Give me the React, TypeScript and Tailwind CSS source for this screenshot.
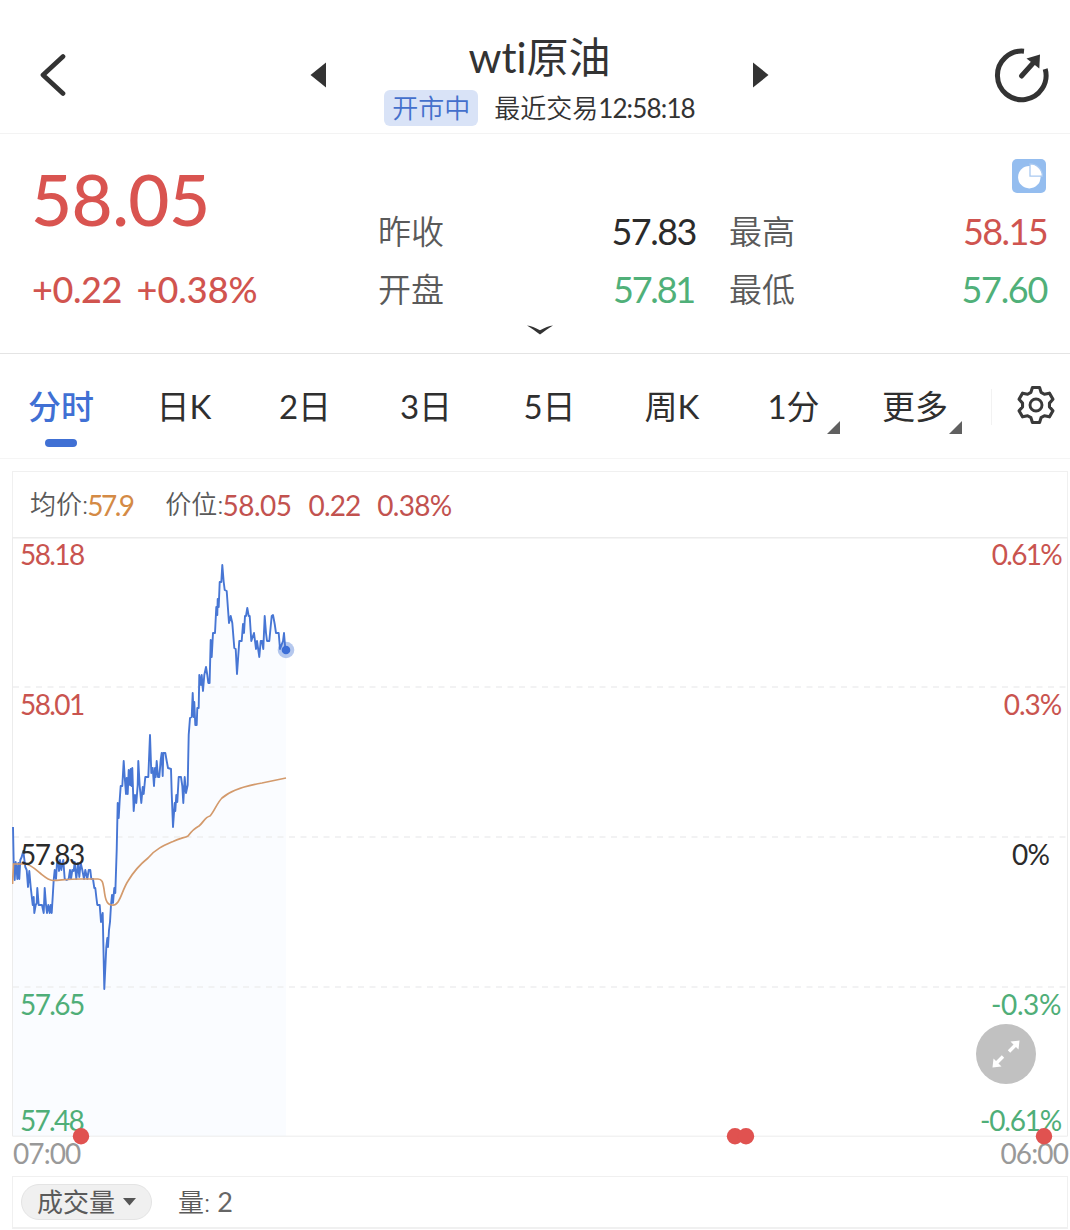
import { useState } from "react";

const PRICE_POINTS =
  "13,827 13.7,863 14.7,880 15.7,862 16.7,870 17.3,879 18.3,863 19.3,879 20.3,860 21.7,857 23.3,851 25.3,867 26.7,870 28,887 29.3,871 30.7,887 31.7,896 32.7,905 33.7,897 34.3,913 35.7,905 36.7,903 37.3,888 38.7,905 42,905 43.7,913 44.7,888 46,905 47,913 48.3,905 49.7,913 50.7,905 51.7,913 52.7,897 53.7,880 54.7,870 56,879 57,863 58.3,862 59,871 60,860 61.3,870 62.7,862 63.3,860 64.7,879 66.7,880 68.7,879 70,870 71,879 72.3,870 73.7,871 74.7,862 76.3,879 78,863 79.3,877 80.7,863 82.3,870 84,879 85.3,870 87.3,879 88.7,870 90.3,870 91.3,879 93,879 94.3,888 95.3,888 96.3,897 97.3,905 99.7,905 101,922 102.7,913 104.3,989 106.3,947 107.3,938 108,947 109,930 110,922 111,905 112,895 113,903 114.3,888 115.3,893 116.7,850 117.7,803 118.7,818 119.7,800 120.7,786 122.3,786 123.7,761 124.7,777 126,794 126.7,778 127.7,794 128.7,770 130,785 130.7,769 131.6,786 132.3,768 133.7,811 135,795 136.3,803 137.7,785 138.3,761 139.7,786 141.3,803 142.7,787 143.7,794 145.3,777 148.3,777 150,735 151.3,773 152.7,768 154,786 155,768 155.7,777 156.7,761 158,777 159.3,777 160.7,760 161.7,753 162.7,776 163.3,753 165.3,753 166.7,761 168,768 171,769 171.7,793 173,827 174.7,803 175.3,811 176.3,795 177.3,802 178.7,777 181,777 182.3,786 183.3,803 184.7,777 186,793 187.7,785 188.7,735 190,718 191.7,717 192.7,693 193.7,717 194.3,702 195.3,725 196.7,725 197.3,708 198.7,708 199.3,675 201,685 201.7,675 203,691 204.3,675 206,667 207.3,675 208.3,683 209.6,683 210.7,640 211.7,657 213,633 215,633 216.3,607 217.3,615 217.7,599 218.7,607 219.7,582 221.3,582 222.3,565 223.7,582 224.7,590 226.7,591 229,623 230.7,616 232.3,623 234.3,648 235.7,649 237,674 239.3,641 241.7,641 243,624 244,633 245,616 246,616 247.3,608 248.7,616 249.7,616 251.3,641 254,633 256,649 257,641 259.3,657 260.7,641 262,641 263.3,649 264.7,616 266,633 267,641 269.3,641 271.7,616 273,615 274.7,624 276,633 278.7,633 280,649 283,641 284,633 285.3,649";

const AVG_PATH =
  "M12.5 884 L13.5 864 H26 C31 865 35 869 40 873 C45 877 48 880 53 880.5 C62 880 70 879 80 879 L98 879 C103 879 103 884 104 889 C105 897 106 905 112 905 C120 906 121 892 128 881 C134 871 143 862 148 858 C155 849 165 845 173 841.5 C180 838 184 838 188 836 C191 832 195 828 199 826 C203 823 205 817 210 816 C214 812 217 803 222 798 C231 790 244 786 262 783 L286 778";

const TABS = [
  { label: "分时", cls: "w-[122px]" },
  { label: "日K", cls: "w-[124px]" },
  { label: "2日", cls: "w-[118px]" },
  { label: "3日", cls: "w-[124px]" },
  { label: "5日", cls: "w-[123px]" },
  { label: "周K", cls: "w-[122px]" },
  { label: "1分", cls: "w-[121px]", menu: true },
  { label: "更多", cls: "w-[122px]", menu: true },
];

const LEVELS = [
  { price: "58.18", pct: "0.61%", cls: "text-[#c9544f]", pctCls: "tracking-[-1.7px]" },
  { price: "58.01", pct: "0.3%", cls: "text-[#c9544f]", pctCls: "tracking-[-1.1px]" },
  { price: "57.83", pct: "0%", cls: "text-[#2b2b2b]", pctCls: "pr-3 tracking-[-0.9px]" },
  { price: "57.65", pct: "-0.3%", cls: "text-[#4fae78]", pctCls: "tracking-[-0.4px]" },
];

const EVENTS = [81, 735, 746, 1044];

// six-tooth gear outline: [radius, degrees from the tooth axis]
const TOOTH: [number, number][] = [[13.6, -22], [17.9, -11.5], [17.9, 11.5], [13.6, 22]];
const GEAR_POINTS = [0, 60, 120, 180, 240, 300]
  .flatMap((axis) =>
    TOOTH.map(([r, off]) => {
      const a = ((axis + off - 90) * Math.PI) / 180;
      return `${(20 + r * Math.cos(a)).toFixed(2)},${(20 + r * Math.sin(a)).toFixed(2)}`;
    })
  )
  .join(" ");

function Quote({ label, value, cls }: { label: string; value: string; cls: string }) {
  return (
    <div className="flex h-[58px] items-center justify-between">
      <span className="text-[33px] font-[350] text-[#5a5a5a]">{label}</span>
      <span className={`pb-0.5 text-[36px] ${cls}`}>{value}</span>
    </div>
  );
}

function Header() {
  return (
    <header className="flex h-[134px] border-b border-[#f3f3f3] pl-10">
      <svg className="mt-[54px] h-[43px] w-[26px]" viewBox="0 0 26 43" fill="none" stroke="#333" strokeWidth="4.7" strokeLinecap="round" strokeLinejoin="round">
        <path d="M23 2.5 L3 21 L23 39.5" />
      </svg>
      <svg className="mt-[62px] ml-[244px] h-[26px] w-4" viewBox="0 0 16 26" fill="#333">
        <path d="M16 0.5 V25.5 L0.5 13 Z" />
      </svg>
      <div className="flex w-[427px] flex-col items-center pt-8">
        <h1 className="h-[50px] text-[42px] leading-[50px] text-[#333] [font-variant-ligatures:none]">wti原油</h1>
        <div className="mt-2 flex h-9 items-center">
          <span className="flex h-9 w-[94px] items-center justify-center rounded-md bg-[#d9e3f7] text-[26px] font-[350] text-[#4470cc]">开市中</span>
          <span className="ml-4 text-[26px] font-[350] whitespace-nowrap text-[#333]">
            最近交易<span className="font-normal tracking-[-0.85px]">12:58:18</span>
          </span>
        </div>
      </div>
      <svg className="mt-[62px] h-[26px] w-4" viewBox="0 0 16 26" fill="#333">
        <path d="M0 0.5 V25.5 L15.5 13 Z" />
      </svg>
      <svg className="mt-[46px] ml-[225px] h-[58px] w-[56px]" viewBox="0 0 56 58" fill="none" stroke="#333">
        <path d="M30 5.2 A24.3 24.3 0 1 0 51.2 23" strokeWidth="5" />
        <path d="M27.5 30 L41 15" strokeWidth="5" strokeLinecap="round" />
        <path d="M32.5 12.5 L46 8.5 L45.3 22.5 Z" fill="#333" stroke="none" />
      </svg>
    </header>
  );
}

function Summary() {
  return (
    <section className="relative flex h-[220px] border-b border-[#e4e4e4] pl-8">
      <div className="w-[346px] text-[#d95450]">
        <div className="mt-[25px] -ml-px h-20 text-[71px] leading-[80px] font-medium tracking-[-0.6px]">58.05</div>
        <div className="mt-[30px] flex h-10 text-[36px] leading-[40px] font-medium text-[#d1544f]">
          <span className="w-[104.5px] tracking-[-0.4px]">+0.22</span>
          <span>+0.38%</span>
        </div>
      </div>
      <div className="w-[318px] pt-[69px]">
        <Quote label="昨收" value="57.83" cls="tracking-[-1.5px] text-[#2b2b2b]" />
        <Quote label="开盘" value="57.81" cls="pr-0.5 tracking-[-2.2px] text-[#50b079]" />
      </div>
      <div className="ml-[33px] w-[318px] pt-[69px]">
        <Quote label="最高" value="58.15" cls="tracking-[-1.6px] text-[#cf5450]" />
        <Quote label="最低" value="57.60" cls="tracking-[-1.3px] text-[#50b079]" />
      </div>
      <svg className="absolute top-[25px] left-[1012px] h-[34px] w-[34px]" viewBox="0 0 34 34">
        <rect width="34" height="34" rx="5" fill="#94bdef" />
        <circle cx="17.3" cy="18.2" r="11.2" fill="#fff" />
        <path d="M18 4.9 A12.3 12.3 0 0 1 30.4 17.2 H18 Z" fill="#fff" stroke="#a9c9f1" strokeWidth="1.3" />
      </svg>
      <svg className="absolute top-[191px] left-[527px] h-2.5 w-[26px]" viewBox="0 0 26 10" fill="#333">
        <path d="M0 0.5 C4 0.7 8 2.6 13 5.2 C18 2.6 22 0.7 26 0.5 C22 3 17 6.5 13 9.6 C9 6.5 4 3 0 0.5 Z" />
      </svg>
    </section>
  );
}

function Tabs() {
  const [active, setActive] = useState("分时");
  return (
    <nav className="flex h-[105px] border-b border-[#f5f5f5]">
      {TABS.map(({ label, cls, menu }) => (
        <button key={label} type="button" onClick={() => setActive(label)} className={`relative flex shrink-0 flex-col items-center pt-7 ${cls}`}>
          <span className={`h-12 text-[33px] leading-[48px] ${active === label ? "font-medium text-[#4070d4]" : "text-[#2f2f2f]"}`}>{label}</span>
          {active === label && <span className="mt-[9px] h-2 w-8 rounded-full bg-[#4070d4]" />}
          {menu && (
            <svg className="absolute top-[67px] right-3.5 h-[13px] w-[13px]" viewBox="0 0 13 13" fill="#606060">
              <path d="M13 0 V13 H0 Z" />
            </svg>
          )}
        </button>
      ))}
      <div className="mt-[35px] ml-[15px] h-9 w-px bg-[#f2f2f2]" />
      <svg className="mt-[31px] ml-6 h-10 w-10" viewBox="0 0 40 40" fill="none" stroke="#3a3a3a" strokeLinejoin="round">
        <polygon points={GEAR_POINTS} strokeWidth="3.1" />
        <circle cx="20" cy="20" r="6" strokeWidth="2.9" />
      </svg>
    </nav>
  );
}

function Chart() {
  return (
    <div className="relative h-[600px]">
      <svg className="block h-[600px] w-[1056px]" viewBox="12 537 1056 600" fill="none">
        <polygon points={`${PRICE_POINTS} 286,650 286,1136 13,1136`} fill="#fafcff" />
        {[687, 837, 987].map((y) => (
          <path key={y} d={`M13 ${y} H1067`} stroke="#eeeeef" strokeWidth="1.5" strokeDasharray="6 5.5" />
        ))}
        <path d="M12.5 537 V1136.2 H1067.5 V537" stroke="#ececec" />
        <path d="M12 537.5 H1068" stroke="#ececec" strokeWidth="2" />
        <polyline points={PRICE_POINTS} stroke="#4776d4" strokeWidth="1.9" strokeLinejoin="round" />
        <path d={AVG_PATH} stroke="#d39a6c" strokeWidth="1.7" />
        <circle cx="286" cy="650" r="8.3" fill="#4776d4" fillOpacity="0.4" />
        <circle cx="286" cy="650" r="4.3" fill="#3c6ed6" />
      </svg>
      <div className="absolute inset-0 flex flex-col">
        {LEVELS.map(({ price, pct, cls, pctCls }) => (
          <div key={price} className={`flex h-[150px] justify-between pr-[7px] pl-2 text-[28px] leading-[34px] ${cls}`}>
            <span className="tracking-[-1.6px]">{price}</span>
            <span className={pctCls}>{pct}</span>
          </div>
        ))}
      </div>
      <div className="absolute inset-x-0 bottom-0 flex justify-between pr-[7px] pl-2 text-[28px] leading-[34px] text-[#4fae78]">
        <span className="tracking-[-1.7px]">57.48</span>
        <span className="tracking-[-1.2px]">-0.61%</span>
      </div>
      <button type="button" className="absolute top-[487px] left-[964px] h-[60px] w-[60px] rounded-full bg-[#c1c1c1]">
        <svg viewBox="0 0 60 60" fill="#fff" stroke="#fff">
          <path d="M33 27.5 L40 20.5 M27 32.5 L20 39.5" strokeWidth="3.4" />
          <path d="M34.5 17.5 L43.5 16.5 L42.5 25.5 Z M25.5 42.5 L16.5 43.5 L17.5 34.5 Z" stroke="none" />
        </svg>
      </button>
    </div>
  );
}

export default function App() {
  return (
    <div className="h-[1230px] w-[1070px] overflow-hidden bg-white font-['Lato','Noto_Sans_CJK_SC',sans-serif]">
      <Header />
      <Summary />
      <Tabs />
      <main className="mt-3 ml-3 w-[1056px]">
        <div className="flex h-[66px] items-center border border-b-0 border-[#f0f0f0] pl-[17px] text-[26px] text-[#5a5a5a]">
          <span className="font-[350]">均价:</span>
          <span className="-ml-px w-[44px] text-[28px] tracking-[-2.5px] text-[#d48a45]">57.9</span>
          <span className="ml-[34px] font-[350]">价位:</span>
          <span className="-ml-px text-[28px] tracking-[-0.5px] text-[#c2524f]">58.05</span>
          <span className="ml-[17px] text-[28px] tracking-[-0.9px] text-[#c2524f]">0.22</span>
          <span className="ml-[17px] text-[28px] tracking-[-0.7px] text-[#c2524f]">0.38%</span>
        </div>
        <Chart />
        <div className="relative flex h-[39px] justify-between text-[28px] leading-[32px] tracking-[-0.9px] text-[#999]">
          <span className="pl-px">07:00</span>
          <span>06:00</span>
          <svg className="absolute -top-[9px] left-0 h-[18px] w-[1056px]" viewBox="12 0 1056 18">
            {EVENTS.map((x) => (
              <circle key={x} cx={x} cy="8.3" r="8.2" fill="#e05250" />
            ))}
          </svg>
        </div>
        <div className="flex h-[53px] items-center border border-b-2 border-[#f0f0f0] pl-2 text-[26px] text-[#5a5a5a]">
          <button type="button" className="flex h-9 w-[131px] items-center rounded-full border border-[#e4e4e4] bg-[#f0f0f0] pl-[15px]">
            <span>成交量</span>
            <svg className="ml-2 h-2 w-[13px]" viewBox="0 0 13 8" fill="#555">
              <path d="M0 0 H13 L6.5 7.5 Z" />
            </svg>
          </button>
          <span className="ml-[26px] font-[350]">量:</span>
          <span className="ml-[7px] text-[27px] text-[#666]">2</span>
        </div>
      </main>
    </div>
  );
}
